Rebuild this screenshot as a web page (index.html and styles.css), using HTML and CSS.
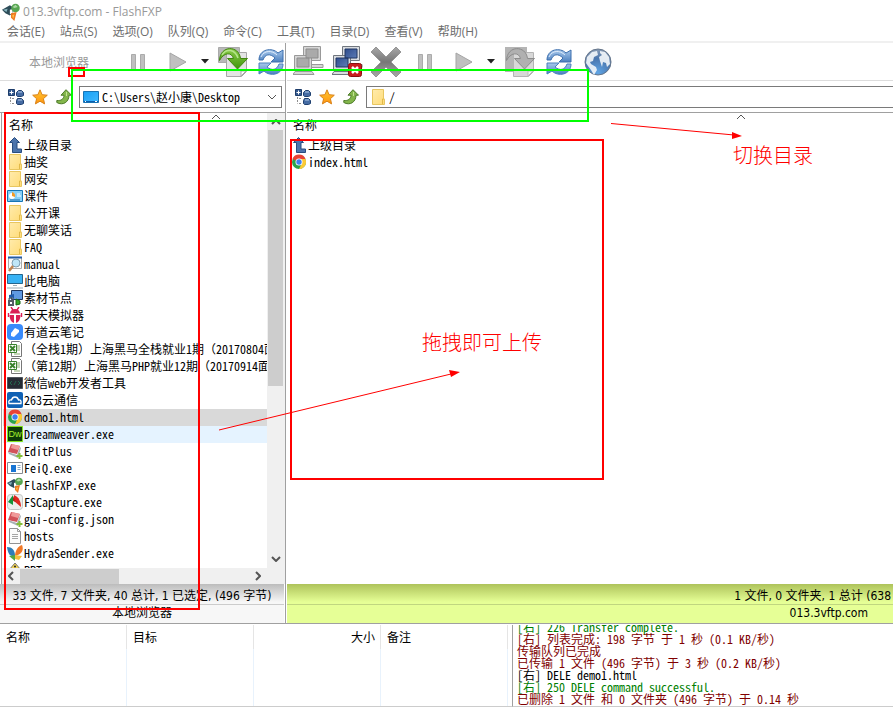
FILE: index.html
```html
<!DOCTYPE html>
<html lang="zh-CN">
<head>
<meta charset="utf-8">
<title>013.3vftp.com - FlashFXP</title>
<link rel="stylesheet" href="styles.css">
</head>
<body>
<svg class="defs" aria-hidden="true">
  <defs>
    <linearGradient id="gX" x1="0" y1="0" x2="0" y2="1"><stop offset="0" stop-color="#a8a8a8"/><stop offset=".5" stop-color="#777"/><stop offset="1" stop-color="#a8a8a8"/></linearGradient>
    <linearGradient id="gGreen" x1="0" y1="0" x2="0" y2="1"><stop offset="0" stop-color="#8ccc4a"/><stop offset="1" stop-color="#3f960c"/></linearGradient>
    <linearGradient id="gBlue" x1="0" y1="0" x2="0" y2="1"><stop offset="0" stop-color="#a9c9ec"/><stop offset="1" stop-color="#4c80bf"/></linearGradient>
    <linearGradient id="gNavy" x1="0" y1="0" x2="1" y2="1"><stop offset="0" stop-color="#1d397c"/><stop offset="1" stop-color="#6f90c8"/></linearGradient>
    <linearGradient id="gFolder" x1="0" y1="0" x2="1" y2="1"><stop offset="0" stop-color="#ffebac"/><stop offset="1" stop-color="#ffdc78"/></linearGradient>
    <linearGradient id="gDesk" x1="0" y1="0" x2="1" y2="1"><stop offset="0" stop-color="#18a0f4"/><stop offset="1" stop-color="#40b8ff"/></linearGradient>
    <radialGradient id="gGlobe" cx=".5" cy=".9" r=".9"><stop offset="0" stop-color="#5fa4e4"/><stop offset=".6" stop-color="#4a76ae"/><stop offset="1" stop-color="#8a9cb4"/></radialGradient>
    <linearGradient id="gStar" x1="0" y1="0" x2="0" y2="1"><stop offset="0" stop-color="#ffc830"/><stop offset="1" stop-color="#ff9410"/></linearGradient>

    <symbol id="flash" viewBox="0 0 16 16"><path d="M0 6 7 2l5 3-5 6-4-2z" fill="#2d4c58"/><path d="M1 6l4-1-1 3z" fill="#88b5bf"/><path d="M7 6l3-1-1 4-2 1z" fill="#fff"/><circle cx="12" cy="4.500" r="3.800" fill="#57a551"/><path d="M9.500 3.500 12 1.500l2 2-3 1z" fill="#a9d7a2"/><path d="M8 9l5-1-2 8-3-3z" fill="#ef7a22"/><path d="M9 11l2-1-1 4z" fill="#ffc246"/></symbol>
    <symbol id="pause" viewBox="0 0 16 16"><path d="M1.500.500h4v15h-4zM10.500.500h4v15h-4z" fill="#c0c0c0" stroke="#ababab"/></symbol>
    <symbol id="play" viewBox="0 0 18 20"><path d="M1 1v18l16-9z" fill="#c0c0c0" stroke="#a5a5a5"/></symbol>
    <symbol id="caret" viewBox="0 0 8 5"><path d="M0 0h8L4 4.500z" fill="#222"/></symbol>
    <symbol id="xfer" viewBox="0 0 32 32"><path d="M1.500 1.500h21v15h-21z" fill="#b8b8b8" stroke="#aaa"/><path d="M9.500 6.500h20v19l-5 5h-15z" fill="#e4e4e4" stroke="#a6a6a6"/><path d="M29 25l-5 5v-5z" fill="#fff" stroke="#aaa"/><path d="M2.500 14.500C3 -1 22-1 23.500 12.500h7l-10 10.500-10-10.500h6c-2-7-10-6-14 2z" fill="url(#gGreen)" stroke="#40850f"/><path d="M5 9C9 2 18 3 21 12" fill="none" stroke="#b4e48a" stroke-width="1.500"/></symbol>
    <symbol id="xferOff" viewBox="0 0 32 32"><path d="M1 1h22v25H1z" fill="#b5b5b5"/><path d="M9.500 6.500h20v19l-5 5h-15z" fill="#d8d8d8" stroke="#b4b4b4"/><path d="M29 25l-5 5v-5z" fill="#f6f6f6" stroke="#bbb"/><path d="M2.500 14.500C3 -1 22-1 23.500 12.500h7l-10 10.500-10-10.500h6c-2-7-10-6-14 2z" fill="#b0b0b0" stroke="#8c8c8c"/></symbol>
    <symbol id="refresh" viewBox="0 0 28 28"><path d="M2 12C2 1 15-1 21 5l5-3v12H14l4-4C13 5 8 6 6 12z" fill="url(#gBlue)" stroke="#3c6fae"/><path d="M26 16c0 11-13 13-19 7l-5 3V15h12l-4 4c5 4 10 3 12-3z" fill="url(#gBlue)" stroke="#4c7fbd"/><path d="M4 9C7 2 15 2 20 7" fill="none" stroke="#dceafa"/></symbol>
    <symbol id="pcs" viewBox="0 0 32 32"><g fill="#d6d6d6" stroke="#999"><path d="M10.500.500h17v14h-17zM18 18.500h12v3H18z"/><path d="M1.500 9.500h17v14h-17zM0 28.500l2-3h17l2 3z"/></g><path d="M13 3h12v9H13zM4 12h12v9H4z" fill="#aaa" stroke="#8d8d8d"/></symbol>
    <symbol id="pcsOn" viewBox="0 0 32 32"><g fill="#d9dce0" stroke="#70767e"><path d="M10.500.500h17v14h-17zM18 18.500h12v3H18z"/><path d="M1.500 9.500h17v14h-17zM0 28.500l2-3h17l2 3z"/></g><path d="M13 3h12v9H13zM4 12h12v9H4z" fill="url(#gNavy)" stroke="#203662"/><rect x="16.500" y="17.500" width="13" height="13" rx="2" fill="#c91d20" stroke="#8c1010"/><path d="M20 21l6 6m0-6l-6 6" stroke="#fff" stroke-width="2.500"/></symbol>
    <symbol id="cross" viewBox="0 0 32 32"><path d="M5 1l10 10L25 1l5 5-10 10 10 10-5 5-10-10L5 31l-5-5 10-10L0 6z" fill="url(#gX)" stroke="#969696"/></symbol>
    <symbol id="globe" viewBox="0 0 28 28"><circle cx="14" cy="14" r="13" fill="url(#gGlobe)" stroke="#65758a"/><path d="M3 9l5-5 5-1 1 4-4 2-1 4-3 1 1 2 5 3 1 3-3 5-3-5-3-4-2-3zM16 3l5 1 4 5 1 7-3 3-1-4-3-1-1 5-2-6-1-4 3-2-2-2z" fill="#f4f7fb" opacity=".9"/></symbol>
    <symbol id="tree" viewBox="0 0 16 16"><path d="M.5.500h6v6h-6z" fill="#32588e" stroke="#1d3c6a"/><path d="M1.500 3.500h4M3.500 1.500v4" stroke="#fff"/><path d="M2.500 8v6.500M4 9.500h3M4 14.500h3" stroke="#8d8d8d" stroke-dasharray="2 1"/><path d="M8.500 3.500l2-2h3l2 2v3l-2 1h-4l-1-1zM8.500 11.500l1-2h4l2 2v3l-2 1h-4l-1-1z" fill="#456ba3" stroke="#1f4070"/><path d="M10 3h4M10 11h4" stroke="#b4cce8"/></symbol>
    <symbol id="star" viewBox="0 0 16 16"><path d="M8 .800l2.100 4.900 5.200.500-3.900 3.500 1.200 5.200L8 12.200l-4.600 2.700 1.200-5.200L.700 6.200l5.200-.500z" fill="url(#gStar)" stroke="#d98218"/></symbol>
    <symbol id="up" viewBox="0 0 16 16"><path d="M10 .700l5.500 5.500H13C13 13 7 17 .800 13.500v-2C5 12 8 10 8 6.200H5z" fill="#83b64b" stroke="#4c7a28"/><path d="M10.500 3v4" stroke="#c4e395"/></symbol>
    <symbol id="desk" viewBox="0 0 16 12"><path d="M.5.500h15v11H.5z" fill="url(#gDesk)" stroke="#1873b4"/><path d="M1 10.500h14" stroke="#0c5eae"/><path d="M2 10.500h1M12 10.500h2" stroke="#fff"/></symbol>
    <symbol id="folder" viewBox="0 0 16 16"><path d="M2.500.500h11v9l1 1v5h-12z" fill="url(#gFolder)" stroke="#e8c660"/><path d="M12.500 15v-5h2" fill="none" stroke="#e2b949"/></symbol>
    <symbol id="parent" viewBox="0 0 16 16"><path d="M7.500.500l5 5H10V12h4.500v3.500h-9v-10h-3z" fill="#4c74ac" stroke="#294d80"/></symbol>
    <symbol id="panel" viewBox="0 0 16 16"><path d="M.5 2.500h15v11H.5z" fill="#87d0f8" stroke="#1676b4"/><circle cx="5" cy="8" r="3" fill="#fff"/><path d="M5 8V4a4 4 0 0 1 3 5z" fill="#f49a23"/><path d="M10 6h3M10 8h4" stroke="#fff"/><path d="M3 12h10" stroke="#1466a8"/></symbol>
    <symbol id="manual" viewBox="0 0 16 16"><path d="M1.500 1.500h13v11h-13z" fill="#fafafa" stroke="#aaa"/><path d="M1 1.500h14" stroke="#245ba4" stroke-width="2"/><circle cx="9" cy="7" r="4" fill="#bfe6f8" stroke="#7e9eb2"/><path d="M6 10l-4 5" stroke="#bf8451" stroke-width="2.500"/></symbol>
    <symbol id="thispc" viewBox="0 0 16 16"><path d="M.5 1.500h15v9H.5z" fill="#38b2f4" stroke="#24658c"/><path d="M6 12.500h4M0 15h16" stroke="#9cabb4"/></symbol>
    <symbol id="node" viewBox="0 0 16 16"><path d="M4.500.500h11v9h-11z" fill="#609ae2" stroke="#1d355f"/><path d="M2 5l5-1v5l-2-2-3 3z" fill="#1f5aaa"/><path d="M1 10h6v6H1z" fill="#555c66"/><path d="M3 12h2v2H3z" fill="#fff"/><path d="M2 10V8h4v2" fill="none" stroke="#666"/><path d="M9 9l4 2v3l-4 1z" fill="#36aa28" stroke="#166812"/></symbol>
    <symbol id="bug" viewBox="0 0 16 16"><path d="M4 0l2 3M12 0l-2 3M1.500 6v4M14.500 6v4" stroke="#d91d55" stroke-width="1.400"/><path d="M3 6.500a5 4.500 0 0 1 10 0zM2.500 8H7v8C4 15 2.500 12 2.500 8zM9 8h4.500c0 4-1.500 7-4.500 8z" fill="#d91d55"/></symbol>
    <symbol id="note" viewBox="0 0 16 16"><rect width="16" height="16" rx="4" fill="#398bfb"/><path d="M4 12V9l4-5 4 2v2l-5 5z" fill="#fff"/></symbol>
    <symbol id="excel" viewBox="0 0 16 16"><path d="M4.500.500h8l2 2v13h-10z" fill="#fff" stroke="#777"/><path d="M10 5h3M10 7h3M10 9h3M7 13h6" stroke="#8bac72"/><path d="M1.500 3.500h8v8h-8z" fill="#fff" stroke="#3b832d"/><path d="M3 5l5 5m0-5l-5 5" stroke="#3b832d" stroke-width="2"/></symbol>
    <symbol id="wechat" viewBox="0 0 16 16"><path d="M.5 2.500h15v11H.5z" fill="#252b34" stroke="#4d525a"/><path d="M5 6L3 8l2 2M11 6l2 2-2 2M9 6l-2 4" fill="none" stroke="#23664e"/></symbol>
    <symbol id="cloud" viewBox="0 0 16 16"><rect width="16" height="16" rx="2" fill="#1061b4"/><path d="M2 11.500c-1-3 1-4 2.500-3.500 1-4 6-4 7 0 2-.500 3 1 2.500 3.500z" fill="none" stroke="#fff" stroke-width="1.300"/></symbol>
    <symbol id="chrome" viewBox="0 0 16 16"><circle cx="8" cy="8" r="7" fill="#2ba24c"/><path d="M8 8L1.500 5A7 7 0 0 1 14.500 5z" fill="#e94335"/><path d="M8 8V5h6.400A7 7 0 0 1 8 15l3-6z" fill="#fcc934"/><circle cx="8" cy="8" r="3.500" fill="#fff"/><circle cx="8" cy="8" r="2.700" fill="#3e7ef0"/></symbol>
    <symbol id="dw" viewBox="0 0 16 16"><path d="M.5.500h15v15H.5z" fill="#0e3c08" stroke="#83e41b"/><text x="8" y="11" class="dw-text">Dw</text></symbol>
    <symbol id="edit" viewBox="0 0 16 16"><path d="M4 1l9 2-3 8-9-2z" fill="#d2525a"/><path d="M5 1l8 2-2 4-7-2z" fill="#f09a9a"/><path d="M1 9l9 3 3-8 1 1-3 10-9-4z" fill="#a8b0b4"/><path d="M12.500 10v6M9.500 13h6" stroke="#83bd37" stroke-width="2"/></symbol>
    <symbol id="feiq" viewBox="0 0 16 16"><path d="M.5 2.500h15v11H.5z" fill="#fff" stroke="#858b91"/><path d="M4 5h5v7H4z" fill="#1674d4"/><path d="M10.500 5.500h3M10.500 7.500h3M10.500 9.500h3" stroke="#82a8ca"/></symbol>
    <symbol id="fs" viewBox="0 0 16 16"><rect x=".5" y=".5" width="15" height="15" rx="3" fill="#eceeed" stroke="#c2c5c4"/><path d="M6 1L1 8l5 3z" fill="#159438"/><path d="M7 1c5 2 7 7 7 12L7 7z" fill="#df2720"/><path d="M6 2l3 6-3-1z" fill="#b02618"/></symbol>
    <symbol id="doc" viewBox="0 0 16 16"><path d="M2.500.500h8l3 3v12h-11z" fill="#fbfbfb" stroke="#929292"/><path d="M10.500.500v3h3" fill="none" stroke="#999"/><path d="M5 6.500h6M5 8.500h6M5 10.500h6" stroke="#a5a5a5"/></symbol>
    <symbol id="hydra" viewBox="0 0 16 16"><path d="M0 2c5 0 8 3 8 9-5 1-7-2-8-9z" fill="#2f7db8"/><path d="M15 0c2 5 0 9-7 11C8 6 11 1 15 0z" fill="#f17826"/><path d="M2 11l6-1v6z" fill="#52a744"/><path d="M8 10l7 1-3 4-4-1z" fill="#f5c03d"/></symbol>
    <symbol id="tip" viewBox="0 0 16 16"><path d="M8 1l6 7H2z" fill="#f4d451" stroke="#777"/><circle cx="8" cy="4.500" r="1" fill="#222"/></symbol>
    <symbol id="chev" viewBox="0 0 10 6"><path d="M1 5l4-4 4 4" fill="none" stroke="currentColor" stroke-width="var(--w, 1)"/></symbol>
  </defs>
</svg>

<header>
  <div class="title"><svg class="i18"><use href="#flash"/></svg><span>013.3vftp.com - FlashFXP</span></div>
  <nav class="menu">
    <button>会话(E)</button><button>站点(S)</button><button>选项(O)</button><button>队列(Q)</button><button>命令(C)</button><button>工具(T)</button><button>目录(D)</button><button>查看(V)</button><button>帮助(H)</button>
  </nav>
</header>

<main class="panes">
  <section class="pane local">
    <div class="toolbar">
      <span class="where">本地浏览器</span>
      <button aria-label="暂停"><svg class="i16"><use href="#pause"/></svg></button>
      <button class="run" aria-label="开始"><svg class="play"><use href="#play"/></svg></button>
      <button class="more" aria-label="更多"><svg class="caret"><use href="#caret"/></svg></button>
      <button class="xfer" aria-label="传输"><svg class="i32"><use href="#xfer"/></svg></button>
      <button class="sync" aria-label="刷新"><svg class="i28"><use href="#refresh"/></svg></button>
    </div>
    <div class="address">
      <button aria-label="目录树"><svg class="i16"><use href="#tree"/></svg></button>
      <button aria-label="收藏"><svg class="i16"><use href="#star"/></svg></button>
      <button aria-label="上级"><svg class="i16"><use href="#up"/></svg></button>
      <label class="path"><svg class="desk"><use href="#desk"/></svg>
        <select aria-label="本地路径"><option>C:\Users\赵小康\Desktop</option></select>
        <svg class="chev flip"><use href="#chev"/></svg></label>
    </div>
    <div class="browser">
      <div class="files">
        <div class="colhead"><span>名称</span><svg class="chev sort"><use href="#chev"/></svg></div>
        <ul>
          <li><svg class="i16"><use href="#parent"/></svg>上级目录</li>
          <li><svg class="i16"><use href="#folder"/></svg>抽奖</li>
          <li><svg class="i16"><use href="#folder"/></svg>网安</li>
          <li><svg class="i16"><use href="#panel"/></svg>课件</li>
          <li><svg class="i16"><use href="#folder"/></svg>公开课</li>
          <li><svg class="i16"><use href="#folder"/></svg>无聊笑话</li>
          <li><svg class="i16"><use href="#folder"/></svg>FAQ</li>
          <li><svg class="i16"><use href="#manual"/></svg>manual</li>
          <li><svg class="i16"><use href="#thispc"/></svg>此电脑</li>
          <li><svg class="i16"><use href="#node"/></svg>素材节点</li>
          <li><svg class="i16"><use href="#bug"/></svg>天天模拟器</li>
          <li><svg class="i16"><use href="#note"/></svg>有道云笔记</li>
          <li><svg class="i16"><use href="#excel"/></svg>（全栈1期）上海黑马全栈就业1期（20170804面</li>
          <li><svg class="i16"><use href="#excel"/></svg>（第12期）上海黑马PHP就业12期（20170914面</li>
          <li><svg class="i16"><use href="#wechat"/></svg>微信web开发者工具</li>
          <li><svg class="i16"><use href="#cloud"/></svg>263云通信</li>
          <li class="selected"><svg class="i16"><use href="#chrome"/></svg>demo1.html</li>
          <li class="hover"><svg class="i16"><use href="#dw"/></svg>Dreamweaver.exe</li>
          <li><svg class="i16"><use href="#edit"/></svg>EditPlus</li>
          <li><svg class="i16"><use href="#feiq"/></svg>FeiQ.exe</li>
          <li><svg class="i16"><use href="#flash"/></svg>FlashFXP.exe</li>
          <li><svg class="i16"><use href="#fs"/></svg>FSCapture.exe</li>
          <li><svg class="i16"><use href="#edit"/></svg>gui-config.json</li>
          <li><svg class="i16"><use href="#doc"/></svg>hosts</li>
          <li><svg class="i16"><use href="#hydra"/></svg>HydraSender.exe</li>
          <li><svg class="i16"><use href="#tip"/></svg>PPT</li>
        </ul>
      </div>
      <div class="vbar"><svg class="chev bold"><use href="#chev"/></svg><div class="vthumb"></div><svg class="chev bold flip end"><use href="#chev"/></svg></div>
      <div class="hbar"><svg class="chev bold left"><use href="#chev"/></svg><div class="hthumb"></div><svg class="chev bold right"><use href="#chev"/></svg></div>
    </div>
    <footer class="status gray"><p class="count">33 文件, 7 文件夹, 40 总计, 1 已选定, (496 字节)</p><p class="site">本地浏览器</p></footer>
  </section>

  <section class="pane remote">
    <div class="toolbar">
      <button aria-label="连接"><svg class="i32"><use href="#pcs"/></svg></button>
      <button aria-label="断开"><svg class="i32"><use href="#pcsOn"/></svg></button>
      <button aria-label="中止"><svg class="i32"><use href="#cross"/></svg></button>
      <button class="hold" aria-label="暂停"><svg class="i16"><use href="#pause"/></svg></button>
      <button class="run" aria-label="开始"><svg class="play"><use href="#play"/></svg></button>
      <button class="more" aria-label="更多"><svg class="caret"><use href="#caret"/></svg></button>
      <button class="xfer" aria-label="传输"><svg class="i32"><use href="#xferOff"/></svg></button>
      <button class="sync" aria-label="刷新"><svg class="i28"><use href="#refresh"/></svg></button>
      <button class="web" aria-label="网络"><svg class="i28"><use href="#globe"/></svg></button>
    </div>
    <div class="address">
      <button aria-label="目录树"><svg class="i16"><use href="#tree"/></svg></button>
      <button aria-label="收藏"><svg class="i16"><use href="#star"/></svg></button>
      <button aria-label="上级"><svg class="i16"><use href="#up"/></svg></button>
      <label class="path"><svg class="i16"><use href="#folder"/></svg><input type="text" value="/" aria-label="远程路径"></label>
    </div>
    <div class="files">
      <div class="colhead"><span>名称</span><svg class="chev sort"><use href="#chev"/></svg></div>
      <ul>
        <li><svg class="i16"><use href="#parent"/></svg>上级目录</li>
        <li><svg class="i16"><use href="#chrome"/></svg>index.html</li>
      </ul>
    </div>
    <footer class="status green"><p class="count">1 文件, 0 文件夹, 1 总计 (638</p><p class="site">013.3vftp.com</p></footer>
  </section>
</main>

<section class="bottom">
  <table class="queue">
    <thead><tr><th>名称</th><th>目标</th><th class="num">大小</th><th>备注</th><th></th></tr></thead>
    <tbody><tr><td></td><td></td><td></td><td></td><td></td></tr></tbody>
  </table>
  <div class="log">
    <p class="ok">[右] 226 Transfer complete.</p>
    <p>[右] 列表完成: 198 字节 于 1 秒 (0.1 KB/秒)</p>
    <p>传输队列已完成</p>
    <p>已传输 1 文件 (496 字节) 于 3 秒 (0.2 KB/秒)</p>
    <p class="cmd">[右] DELE demo1.html</p>
    <p class="ok">[右] 250 DELE command successful.</p>
    <p>已删除 1 文件 和 0 文件夹 (496 字节) 于 0.14 秒</p>
  </div>
</section>

<svg class="marks" viewBox="0 0 893 708" width="893" height="708">
  <g fill="none" stroke="#f00" stroke-width="2">
    <path d="M69 68h15v8H69zM5 113h194v496H5zM291 140h312v339H291z"/>
    <path d="M72 70h516v51H72z" stroke="#0f0"/>
    <path d="M611 123.500L734 135M219 430l232-56" stroke-width="1"/>
  </g>
  <path d="M732 132l10 4-10 3zM449 370l11 2-9 5z" fill="#f00"/>
  <text x="733" y="163">切换目录</text>
  <text x="422" y="350">拖拽即可上传</text>
</svg>
</body>
</html>
```

FILE: styles.css
```css
* { box-sizing: border-box; }

body {
  margin: 0;
  height: 100vh;
  display: flex;
  flex-direction: column;
  overflow: hidden;
  position: relative;
  background: #fff;
  color: #000;
  font: 12px/16px "Noto Sans Mono CJK SC", "Liberation Mono", "Noto Sans CJK SC", monospace;
}

p, ul { margin: 0; padding: 0; list-style: none; }
button { border: 0; padding: 0; background: none; font: inherit; color: inherit; display: flex; }
svg { display: block; flex: none; }
.defs { position: absolute; width: 0; height: 0; }
.i16 { width: 16px; height: 16px; }
.i18 { width: 18px; height: 18px; }
.i28 { width: 28px; height: 28px; }
.i32 { width: 32px; height: 32px; }
.play { width: 18px; height: 20px; }
.caret { width: 8px; height: 5px; }
.desk { width: 16px; height: 12px; }
.chev { width: 10px; height: 6px; color: #555; }
.bold { --w: 2; }
.flip { transform: rotate(180deg); }
.left { transform: rotate(-90deg); }
.right { transform: rotate(90deg); }
.dw-text { font: 9px "Liberation Sans", sans-serif; fill: #a6f22d; text-anchor: middle; }

.title, .menu {
  display: flex;
  align-items: center;
  font-family: "Open Sans", "Noto Sans CJK SC", sans-serif;
}
.title { height: 23px; padding-left: 2px; gap: 3px; color: #999; }
.menu { height: 20px; padding-left: 7px; gap: 15px; color: #6d6d6d; border-bottom: 2px solid #f0f0f0; }

.panes { flex: 1; min-height: 0; display: flex; }
.pane { display: flex; flex-direction: column; min-width: 0; }
.local { flex: 0 0 286px; border-right: 1px solid #a0a0a0; }
.remote { flex: 1; margin-left: 1px; }

.toolbar { height: 38px; display: flex; align-items: center; border-bottom: 1px solid #ddd; }
.local .toolbar { padding-left: 29px; overflow: hidden; }
.where { color: #999; width: 101px; }
.run { margin-left: 23px; }
.more { margin-left: 14px; }
.xfer { margin-left: 8px; }
.sync { margin-left: 8px; }
.remote .toolbar { padding-left: 6px; gap: 7px; }
.remote .hold { margin-left: 7px; }
.remote .run { margin-left: 15px; }
.remote .more { margin-left: 7px; }
.remote .xfer { margin-left: 2px; }
.remote .sync { margin-left: 2px; }
.remote .web { margin-left: 4px; }

.address { height: 32px; display: flex; align-items: center; gap: 8px; padding-left: 8px; border-bottom: 1px solid #a0a0a0; }
.path { flex: 1; height: 22px; display: flex; align-items: center; gap: 3px; border: 1px solid #7a7a7a; padding: 0 4px 0 3px; margin: 0 3px 0 -1px; }
.remote .path { border-right: 0; margin-right: 0; }
.path select, .path input {
  flex: 1;
  min-width: 0;
  border: 0;
  padding: 0;
  background: none;
  appearance: none;
  font: inherit;
  color: inherit;
  outline: 0;
}

.browser { flex: 1; min-height: 0; display: grid; grid-template: minmax(0, 1fr) 16px / minmax(0, 1fr) 15px; margin-left: 1px; padding-right: 2px; border-left: 1px solid #a0a0a0; background: #f0f0f0; }
.files { overflow: hidden; background: #fff; min-height: 0; }
.remote .files { flex: 1; }
.local .files { padding-left: 1px; border-right: 1px solid #f0f0f0; }
.colhead { height: 24px; padding: 4px 0 0 6px; display: flex; justify-content: space-between; align-items: flex-start; }
.sort { margin-top: -3px; margin-right: 46px; }
.remote .sort { margin-right: 147px; }
.files li { height: 17px; display: flex; align-items: center; gap: 1px; padding: 0 0 1px 4px; white-space: nowrap; }
.selected { background: #d9d9d9; }
.hover { background: #e5f3ff; }

.vbar { display: flex; flex-direction: column; align-items: center; padding-top: 6px; }
.vthumb { width: 15px; height: 256px; margin-top: 5px; background: #cdcdcd; }
.end { margin: auto 0 6px; }
.hbar { display: flex; align-items: center; padding-left: 4px; }
.hthumb { width: 99px; height: 15px; margin-left: 4px; background: #cdcdcd; }
.hbar .right { margin-left: 134px; }

.status { height: 39px; font-family: "DejaVu Sans Condensed", "Noto Sans CJK SC", sans-serif; white-space: nowrap; }
.count { height: 21px; padding-top: 4px; border-bottom: 1px solid #ccc; }
.site { height: 18px; }
.gray { background: linear-gradient(#bcbcbc, #f7f7f7 18px); text-align: center; margin-right: 1px; }
.green { background: linear-gradient(#aec35b, #e6ff96 18px); text-align: right; }
.green .count { border-color: #c0d680; padding-right: 2px; }
.green .site { padding-right: 25px; }

.bottom { height: 85px; display: flex; border-top: 1px solid #a0a0a0; padding-top: 1px; }
.queue { width: 512px; height: 82px; border-collapse: separate; border-spacing: 0; table-layout: fixed; border-bottom: 1px solid #ccc; }
.queue th { width: 127px; height: 24px; padding: 0 5px 1px 6px; font-weight: normal; text-align: left; border-right: 1px solid #e5e5e5; }
.queue td { padding: 0; border-right: 1px solid #e8f2fc; }
.queue .num { text-align: right; }
.queue th:last-child, .queue td:last-child { width: auto; padding: 0; border-right: 0; }
.log { flex: 1; height: 82px; overflow: hidden; display: flex; flex-direction: column; justify-content: flex-end; padding: 0 0 1px 4px; border-left: 1px solid #a0a0a0; border-bottom: 1px solid #ccc; color: #800000; line-height: 12px; white-space: pre; }
.log .ok { color: #008000; }
.log .cmd { color: #000; }

.marks { position: absolute; left: 0; top: 0; pointer-events: none; }
.marks text { font: 300 20px "Noto Sans CJK SC", sans-serif; fill: #f00; }
```
